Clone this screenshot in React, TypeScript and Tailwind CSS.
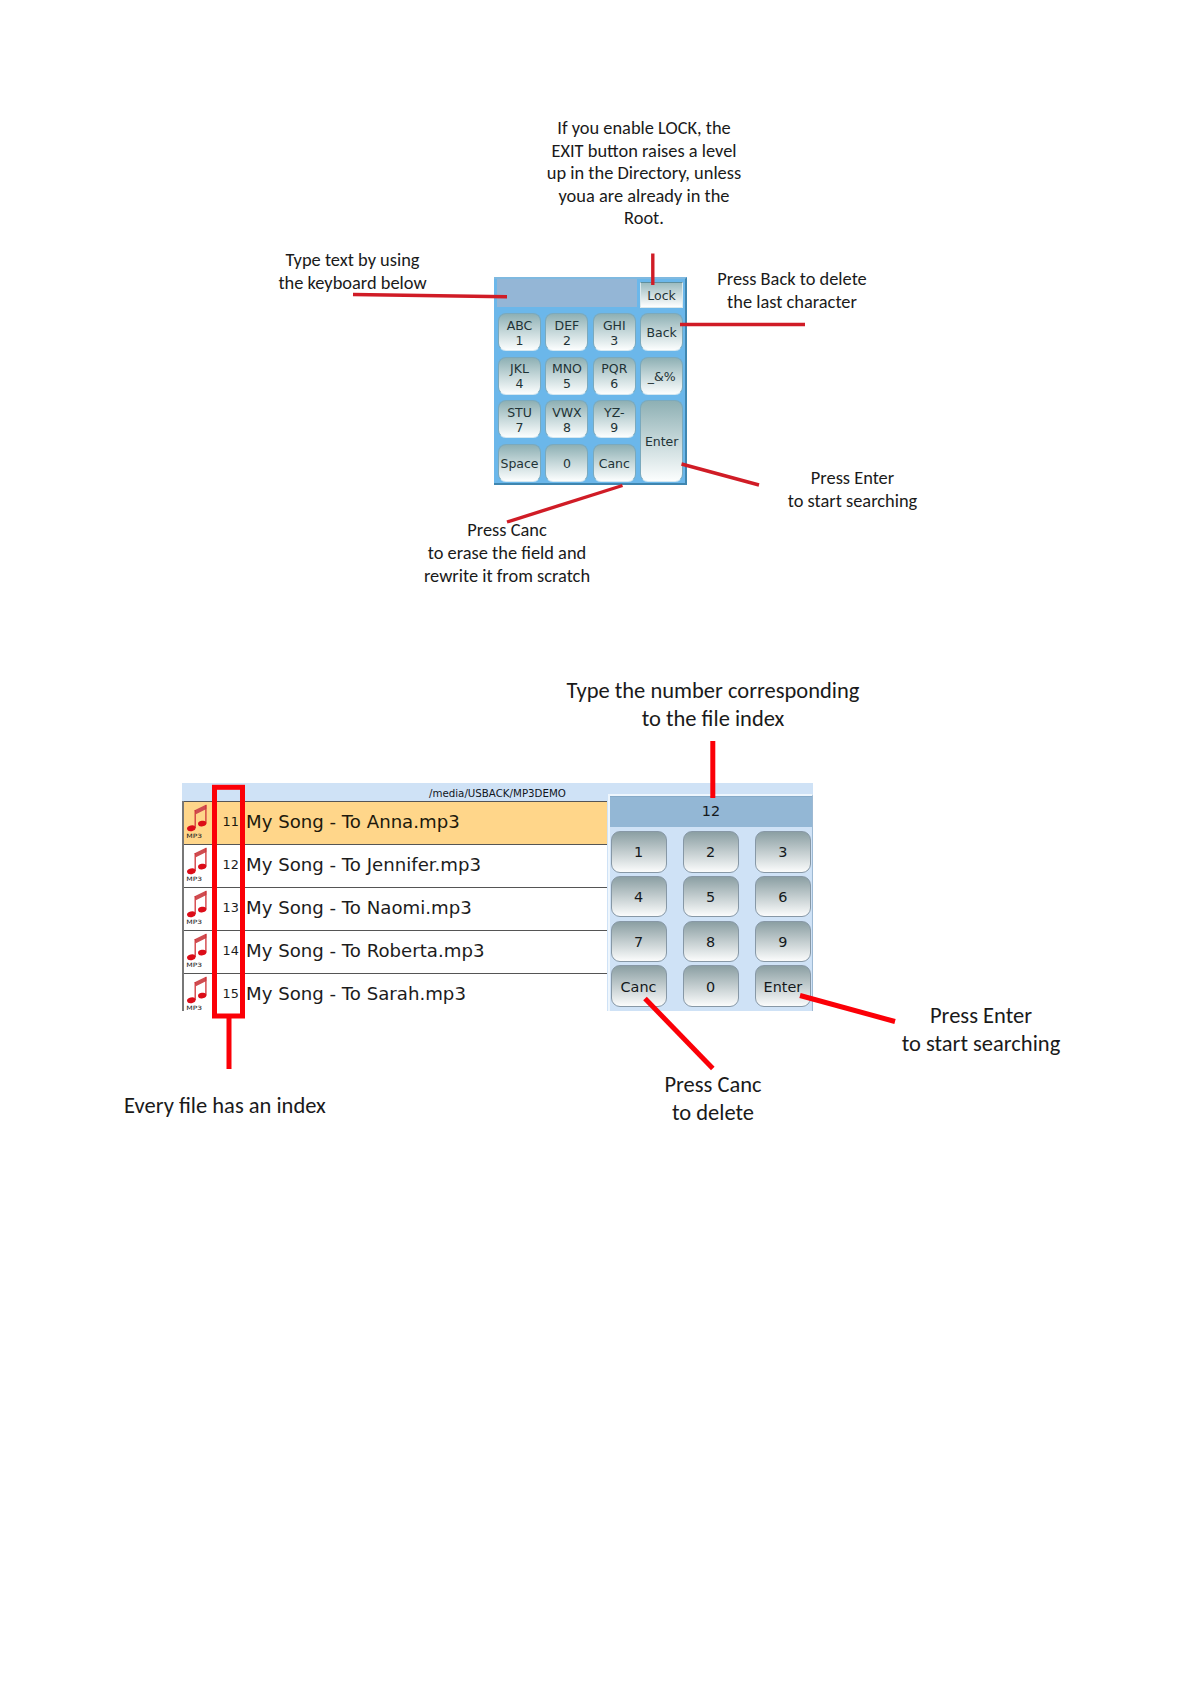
import clsx from "clsx";

const letterKeys = [
  ["ABC", "1"],
  ["DEF", "2"],
  ["GHI", "3"],
  ["Back"],
  ["JKL", "4"],
  ["MNO", "5"],
  ["PQR", "6"],
  ["_&%"],
  ["STU", "7"],
  ["VWX", "8"],
  ["YZ-", "9"],
  ["Enter"],
  ["Space"],
  ["0"],
  ["Canc"],
];

const digitKeys = ["1", "2", "3", "4", "5", "6", "7", "8", "9", "Canc", "0", "Enter"];

const songs = [
  { index: 11, title: "My Song - To Anna.mp3" },
  { index: 12, title: "My Song - To Jennifer.mp3" },
  { index: 13, title: "My Song - To Naomi.mp3" },
  { index: 14, title: "My Song - To Roberta.mp3" },
  { index: 15, title: "My Song - To Sarah.mp3" },
];

const smallNotes = [
  {
    place: "left-[544px] top-[117px] w-[200px] leading-[22.5px]",
    lines: ["If you enable LOCK, the", "EXIT button raises a level", "up in the Directory, unless", "youa are already in the", "Root."],
  },
  { place: "left-[252.5px] top-[248px] w-[200px] leading-[23px]", lines: ["Type text by using", "the keyboard below"] },
  { place: "left-[692px] top-[267px] w-[200px] leading-[23.4px]", lines: ["Press Back to delete", "the last character"] },
  { place: "left-[752.5px] top-[466px] w-[200px] leading-[23.4px]", lines: ["Press Enter", "to start searching"] },
  {
    place: "left-[407px] top-[518px] w-[200px] leading-[23px]",
    lines: ["Press Canc", "to erase the field and", "rewrite it from scratch"],
  },
];

const largeNotes = [
  { place: "left-[563px] top-[677px] w-[300px]", lines: ["Type the number corresponding", "to the file index"] },
  { place: "left-[881px] top-[1002px] w-[200px]", lines: ["Press Enter", "to start searching"] },
  { place: "left-[613px] top-[1071px] w-[200px]", lines: ["Press Canc", "to delete"] },
  { place: "left-[105px] top-[1092px] w-[240px]", lines: ["Every file has an index"] },
];

function Mp3Icon() {
  return (
    <div className="flex w-[19px] shrink-0 flex-col items-center">
      <svg width="20" height="28" viewBox="0 0 20 28">
        <path d="M7.6 6.2 L19.4 0.4 V5 L8.9 10.2 Z" fill="#cf4c50" />
        <path d="M8.2 6 V24 M18.9 1 V19.5" stroke="#d0353a" strokeWidth="1.3" />
        <ellipse cx="4.3" cy="24.3" rx="4.3" ry="2.9" fill="#dc0c18" transform="rotate(-12 4.3 24.3)" />
        <ellipse cx="15.2" cy="19.6" rx="4.2" ry="2.8" fill="#dc0c18" transform="rotate(-12 15.2 19.6)" />
      </svg>
      <span className="-ml-1 mt-px h-[7px] scale-x-130 text-[5.8px] leading-[7px] text-[#222]">MP3</span>
    </div>
  );
}

function TextKeyboard() {
  return (
    <div className="h-[208px] w-[193px] border-t-2 border-r-2 border-b-2 border-t-[#7fb9e0] border-r-[#3f86b0] border-b-[#3f86b0] bg-[#6bb7ea] text-[12.5px] leading-[15px] text-[#1f3336]">
      <div className="flex h-[29px] pl-[3px]">
        <div className="h-[28px] w-[140px] bg-[#94b6d6]" />
        <div className="ml-[3px] mt-[3px] flex h-[26px] w-[43px] items-center justify-center border border-[#dbe9ec] border-t-[#5f8f9d] bg-linear-to-b from-[#9dbcc0] to-white pt-px">
          Lock
        </div>
      </div>
      <div className="mt-[5px] grid grid-cols-[repeat(4,43px)] grid-rows-[repeat(4,38px)] gap-x-[4.4px] gap-y-[5.6px] pl-[4px]">
        {letterKeys.map((key) => (
          <div
            key={key[0]}
            className={clsx(
              "flex flex-col items-center justify-center rounded-[8px] border border-[#7aa9bd] border-b-[#d5e8f1] bg-linear-to-b from-[#8eb0b4] via-[#c6d8da] to-[#fcfefe] pt-[1.6px]",
              key[0] === "Enter" && "row-span-2",
            )}
          >
            {key.map((line) => (
              <span key={line}>{line}</span>
            ))}
          </div>
        ))}
      </div>
    </div>
  );
}

function FileBrowser() {
  return (
    <div className="flex h-[228px] w-[631px] flex-col bg-[#cfe2f6]">
      <div className="h-[18px] shrink-0 pl-[247px] pt-[3px] text-[10.25px] leading-[14.5px] text-[#10161d]">/media/USBACK/MP3DEMO</div>
      <div className="flex min-h-0 flex-1">
        <ul className="h-[210px] w-[425px] overflow-hidden border-l-2 border-[#777] bg-white text-[#1c1c1c]">
          {songs.map((song) => (
            <li
              key={song.index}
              className={clsx(
                "flex h-[43px] items-center border-t border-[#555] pb-[2px]",
                song.index === 11 && "bg-[#ffd68a] text-[#20190c]",
              )}
            >
              <div className="w-[36px] pl-[3px]">
                <Mp3Icon />
              </div>
              <span className="w-[26px] pl-[2.5px] text-[12.8px]">{song.index}</span>
              <span className="whitespace-nowrap text-[18.15px]">{song.title}</span>
            </li>
          ))}
        </ul>
        <div className="-mt-[7px] ml-px flex h-[217px] flex-1 flex-col border-t-2 border-l-2 border-r border-t-[#eef6fd] border-l-[#eef6fd] border-r-[#9db9d3] bg-[#cfe2f6] text-[14.4px] text-[#14191c]">
          <div className="flex h-[31px] items-center justify-center border-t border-[#86aac8] bg-[#93b7d5]">12</div>
          <div className="mt-[4px] grid grid-cols-[repeat(3,56px)] grid-rows-[repeat(4,41.5px)] gap-x-[16.2px] gap-y-[3.3px] pl-[0.5px]">
            {digitKeys.map((key) => (
              <div
                key={key}
                className="flex items-center justify-center rounded-[9px] border border-[#8798a6] bg-linear-to-b from-[#8b9fa3] via-[#c3cdcf] to-[#fbfcfc] pt-[3px]"
              >
                {key}
              </div>
            ))}
          </div>
        </div>
      </div>
    </div>
  );
}

export default function App() {
  return (
    <main className="relative h-[1684px] w-[1191px] overflow-hidden bg-white font-['DejaVu_Sans',sans-serif]">
      <div className="pl-[494px] pt-[277px]">
        <TextKeyboard />
      </div>
      <div className="pl-[182px] pt-[298px]">
        <FileBrowser />
      </div>

      {/* Pointers from the notes to the keys */}
      <svg className="absolute inset-0" width="1191" height="1684" fill="none">
        <g stroke="#d01c26" strokeWidth="3.4">
          <path d="M652.8 253.5 V285" />
          <path d="M353 294.5 L507 296.8" />
          <path d="M680 324.5 H805" />
          <path d="M681.5 464 L759 485" />
          <path d="M622.5 485.5 L507 522" />
        </g>
        <g stroke="#fb0007" strokeWidth="5">
          <rect x="214.5" y="787.3" width="28" height="228.7" />
          <path d="M229 1017 V1069" />
          <path d="M712.8 741 V798" />
          <path d="M800 995.5 L895 1021.5" />
          <path d="M645 998.5 L712.8 1068.5" />
        </g>
      </svg>

      <div className="font-['Carlito','Calibri','Lato',sans-serif] text-center whitespace-nowrap text-[#1a1a1a]">
        {smallNotes.map((note) => (
          <div key={note.place} className={clsx("absolute text-[18.4px]", note.place)}>
            {note.lines.map((line) => (
              <p key={line}>{line}</p>
            ))}
          </div>
        ))}
        {largeNotes.map((note) => (
          <div key={note.place} className={clsx("absolute text-[22.5px] leading-[28px]", note.place)}>
            {note.lines.map((line) => (
              <p key={line}>{line}</p>
            ))}
          </div>
        ))}
      </div>
    </main>
  );
}
